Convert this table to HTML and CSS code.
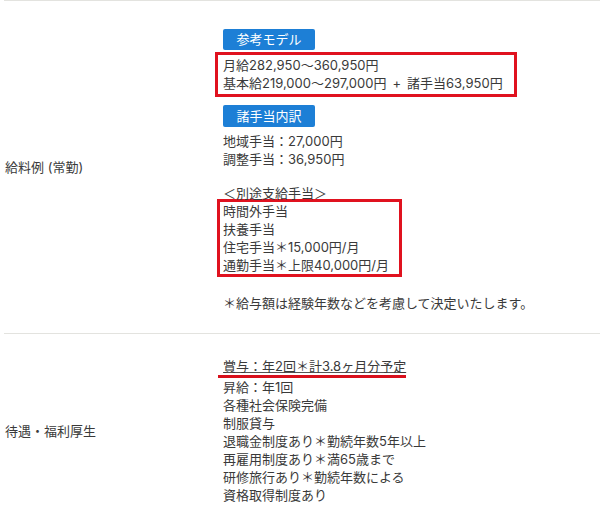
FILE: index.html
```html
<!DOCTYPE html>
<html lang="ja">
<head>
<meta charset="utf-8">
<title>給料例</title>
<link rel="stylesheet" href="styles.css">
</head>
<body>
<div class="table">
  <div class="row row-salary">
    <div class="th">給料例 (常勤)</div>
    <div class="td">
      <div class="badge">参考モデル</div>
      <div class="mark mark-model">
        <p>月給282,950～360,950円</p>
        <p>基本給219,000～297,000円<span class="plus">+</span>諸手当63,950円</p>
      </div>
      <div class="badge badge-second">諸手当内訳</div>
      <p class="after-badge">地域手当：27,000円</p>
      <p>調整手当：36,950円</p>
      <p class="extra-title">＜別途支給手当＞</p>
      <div class="mark mark-extra">
        <p>時間外手当</p>
        <p>扶養手当</p>
        <p>住宅手当＊15,000円/月</p>
        <p>通勤手当＊上限40,000円/月</p>
      </div>
      <p class="note">＊給与額は経験年数などを考慮して決定いたします。</p>
    </div>
  </div>
  <div class="row row-welfare">
    <div class="th">待遇・福利厚生</div>
    <div class="td">
      <p><span class="underline">賞与：年2回＊計3.8ヶ月分予定</span></p>
      <p>昇給：年1回</p>
      <p>各種社会保険完備</p>
      <p>制服貸与</p>
      <p>退職金制度あり＊勤続年数5年以上</p>
      <p>再雇用制度あり＊満65歳まで</p>
      <p>研修旅行あり＊勤続年数による</p>
      <p>資格取得制度あり</p>
    </div>
  </div>
</div>
</body>
</html>
```

FILE: styles.css
```css
html, body {
  margin: 0;
  padding: 0;
  background: #fff;
}

body {
  font-family: "Inter", "Noto Sans CJK JP", sans-serif;
  font-size: 13px;
  line-height: 18px;
  color: #3a3a3a;
}

p {
  margin: 0;
}

.table {
  margin-left: 4px;
}

.row {
  display: grid;
  grid-template-columns: 211px 1fr;
  align-items: center;
  border-top: 1px solid #e3e3df;
}

.th {
  padding-left: 1px;
}

.td {
  padding-left: 8px;
}

.row-salary .td {
  padding-top: 28px;
  padding-bottom: 21px;
}

.row-welfare .td {
  padding-top: 23px;
  padding-bottom: 23px;
}

.badge {
  box-sizing: border-box;
  width: 92px;
  height: 21px;
  line-height: 21px;
  text-align: center;
  background: #1d7fd6;
  color: #fff;
  border-radius: 2px;
  font-size: 13px;
}

.badge-second {
  margin-top: 8px;
  height: 22px;
  line-height: 22px;
}

.mark {
  width: fit-content;
  border: 3px solid #e0121f;
}

.mark-model {
  margin-top: 2px;
  margin-left: -8px;
  padding: 1px 11px 2px 5px;
}

.plus {
  padding: 0 6px;
}

.after-badge {
  margin-top: 5px;
}

.extra-title {
  margin-top: 16px;
}

.mark-extra {
  margin-top: -3px;
  margin-left: -6px;
  padding: 0 10px 0 3px;
}

.note {
  margin-top: 17px;
}

.underline {
  display: inline-block;
  text-decoration: underline;
  text-decoration-color: #555;
  text-underline-offset: 1px;
  border-bottom: 3px solid #d8101c;
  margin-left: -5px;
  padding-left: 5px;
}
```
